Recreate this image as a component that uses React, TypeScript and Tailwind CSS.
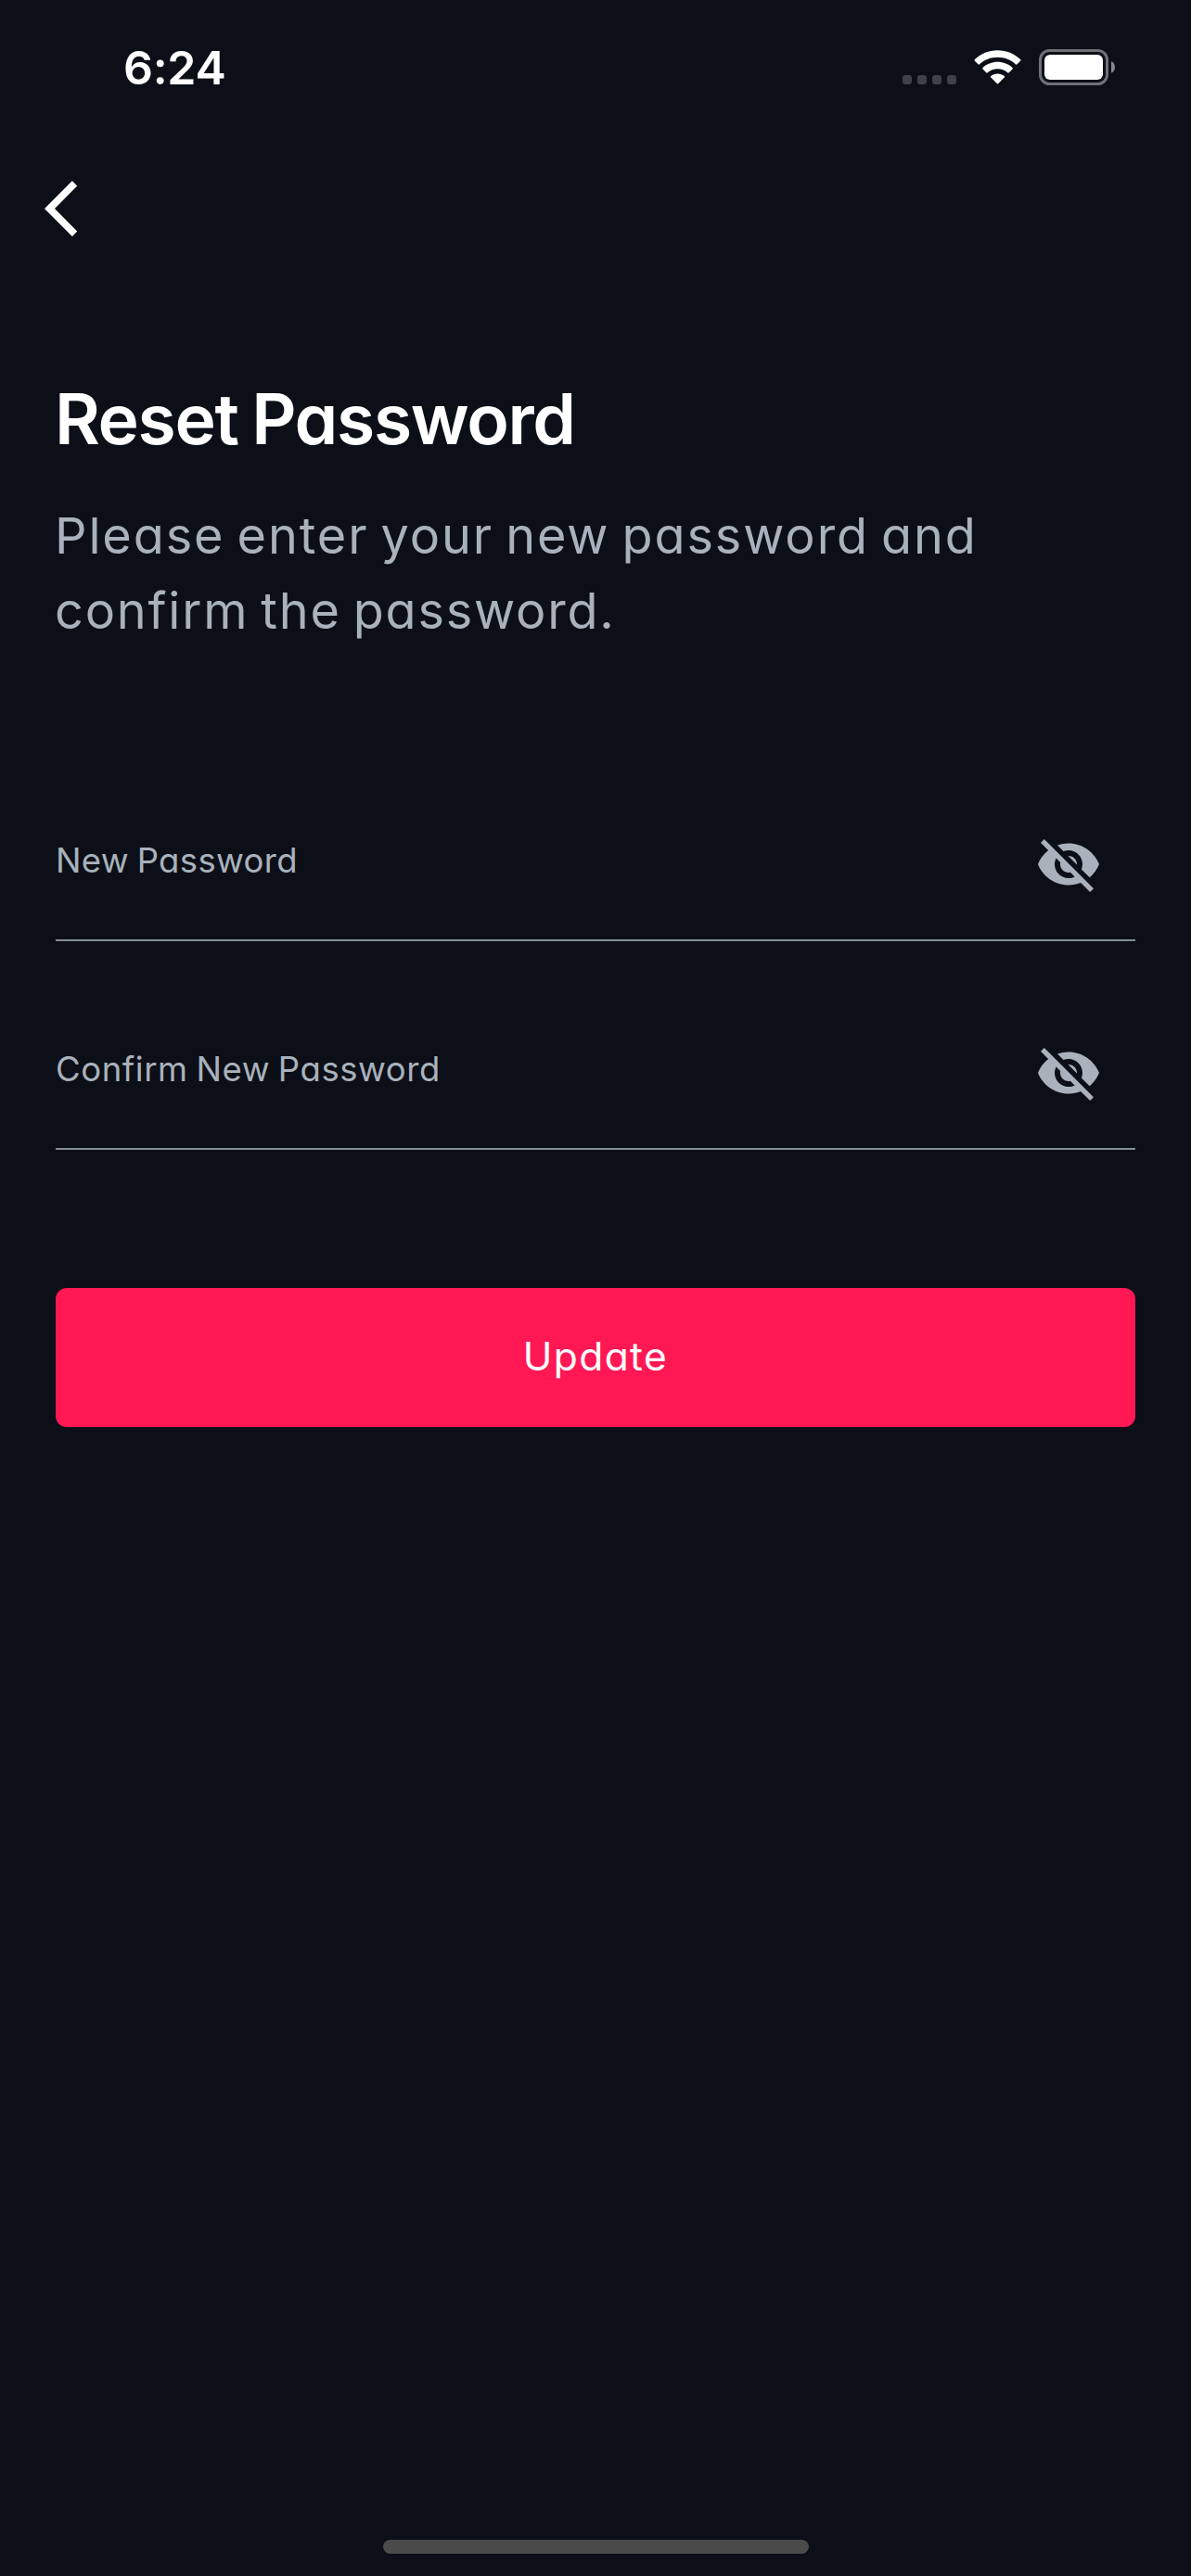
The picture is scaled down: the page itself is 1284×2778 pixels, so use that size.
import { MdVisibilityOff } from 'react-icons/md';

function StatusBar() {
  return (
    <div className="flex h-[60px] items-center justify-between pl-[133px] pr-[82px]">
      <span className="text-[50px] leading-[60px] font-semibold tracking-[-0.3px] text-white">6:24</span>
      <div className="flex items-center">
        <div className="mt-[26px] flex gap-1.5">
          {[0, 1, 2, 3].map((dot) => (
            <span key={dot} className="size-2.5 rounded-[3px] bg-[#3f4148]" />
          ))}
        </div>
        <svg className="-mt-px ml-[19px] h-[38px] w-[51px]" viewBox="0 0 51 38" fill="#fff">
          <path d="M25.5 0.3C16 0.3 7.3 4 0.9 10.1Q0.1 10.9 0.9 11.7L4.5 15.3Q5.3 16 6.1 15.3C11.2 10.5 18 7.8 25.5 7.8S39.8 10.5 44.9 15.3Q45.7 16 46.5 15.3L50.1 11.7Q50.9 10.9 50.1 10.1C43.7 4 35 0.3 25.5 0.3Z" />
          <path d="M25.5 12.8C19.4 12.8 13.8 15.1 9.5 19Q8.7 19.8 9.5 20.6L13.2 24.3Q14 25 14.8 24.3C17.7 21.8 21.4 20.3 25.5 20.3S33.3 21.8 36.2 24.3Q37 25 37.8 24.3L41.5 20.6Q42.3 19.8 41.5 19C37.2 15.1 31.6 12.8 25.5 12.8Z" />
          <path d="M25.5 25.5C22.7 25.5 20.2 26.4 18.2 28Q17.4 28.8 18.2 29.6L24.7 36.1Q25.5 36.9 26.3 36.1L32.8 29.6Q33.6 28.8 32.8 28C30.8 26.4 28.3 25.5 25.5 25.5Z" />
        </svg>
        <svg className="ml-[19px] h-[40px] w-[82px]" viewBox="0 0 82 40">
          <rect x="1.5" y="1.5" width="72" height="36" rx="10" fill="none" stroke="#6f7077" strokeWidth="3" />
          <rect x="6" y="6" width="63" height="27" rx="6" fill="#fff" />
          <path d="M78 13.3C80.7 14.3 82 16.7 82 19.5S80.7 24.7 78 25.7Z" fill="#85868b" />
        </svg>
      </div>
    </div>
  );
}

function PasswordField({ label, tracking }: { label: string; tracking: string }) {
  return (
    <div className="flex h-[119px] items-start justify-between border-b-2 border-[#848d96] pr-9">
      <span className={`flex h-16 items-center text-[36.5px] [word-spacing:-2px] ${tracking}`}>{label}</span>
      <MdVisibilityOff className="size-[72px] shrink-0" />
    </div>
  );
}

export default function App() {
  return (
    <main className="flex h-[2778px] w-[1284px] flex-col bg-[#0c0f17] pt-[43px] [font-family:Inter,sans-serif] text-[#a9b2bc] [font-feature-settings:'cv11']">
      <StatusBar />
      <button className="mt-[86px] ml-12 size-[72px]" aria-label="Back">
        <svg className="size-[72px]" viewBox="0 0 72 72" fill="#fff">
          <path d="M29.9 6L35.2 11.4L11 36L35.2 60.6L29.9 66L0 36Z" />
        </svg>
      </button>
      <section className="flex flex-col px-[60px] pt-[135px]">
        <h1 className="-ml-px text-[75px] leading-[112px] font-semibold tracking-[-1.35px] [word-spacing:-3px] text-white">
          Reset Password
        </h1>
        <p className="mt-[29px] -ml-px text-[54px] leading-[81px] tracking-[1.9px] [word-spacing:-4px]">
          Please enter your new password and
          <br />
          <span className="tracking-[1.8px]">confirm the password.</span>
        </p>
        <div className="mt-[197px] flex flex-col gap-[106px]">
          <PasswordField label="New Password" tracking="tracking-[0.35px]" />
          <PasswordField label="Confirm New Password" tracking="tracking-[0.55px]" />
        </div>
        <button className="mt-[149px] h-[150px] rounded-xl bg-[#ff1854] pb-0.5 text-[42.5px] tracking-[1.4px] text-white">
          Update
        </button>
      </section>
      <div className="mt-auto mb-6 h-[15px] w-[459px] self-center rounded-full bg-[#4b4b4b]" />
    </main>
  );
}
